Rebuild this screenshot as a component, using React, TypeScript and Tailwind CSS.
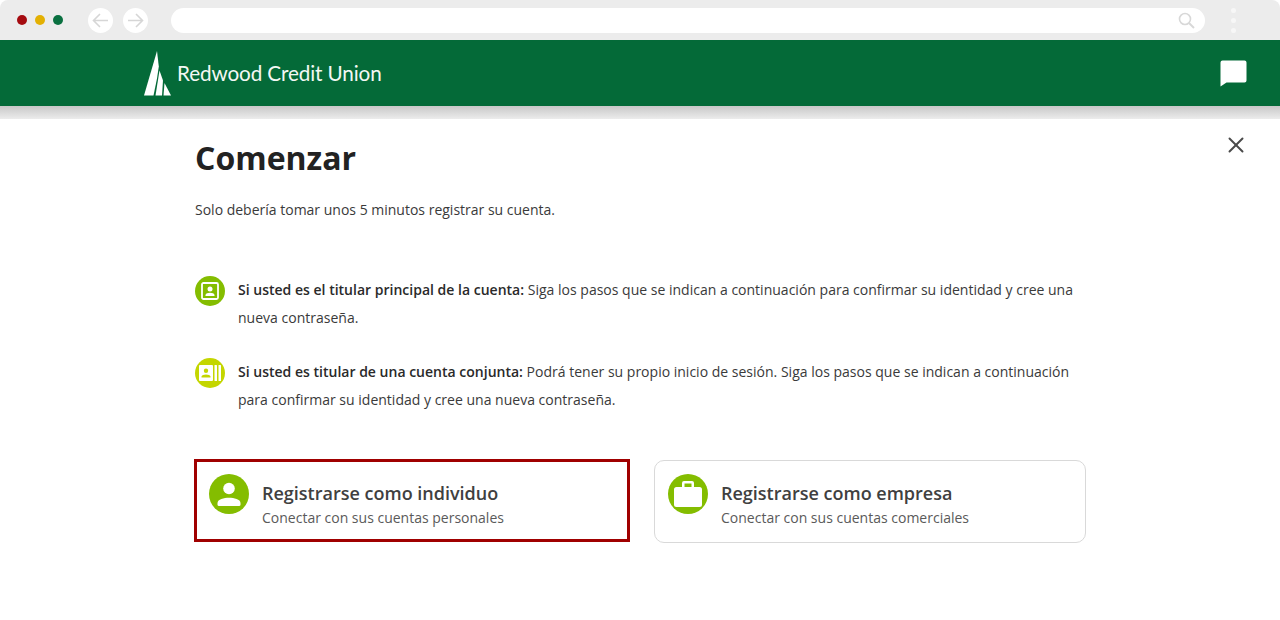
import { X } from "lucide-react";

function BrowserBar() {
    return (
        <div className="h-10 bg-[#ececec] rounded-t-lg flex items-center pl-[17px] pr-[40px]">
            <div className="flex items-center gap-[8px]">
                <div className="w-[10px] h-[10px] rounded-full bg-[#a50b10]"></div>
                <div className="w-[10px] h-[10px] rounded-full bg-[#e3b003]"></div>
                <div className="w-[10px] h-[10px] rounded-full bg-[#0a7040]"></div>
            </div>
            <div className="flex items-center gap-[10px] ml-[25px]">
                <div className="w-[25px] h-[25px] rounded-full bg-white flex items-center justify-center">
                    <svg className="w-[17px] h-[17px]" fill="none" stroke="#d6d6d6" strokeWidth={1.6} viewBox="0 0 17 17">
                        <path d="M16 8.5H1.5M8 2 1.500 8.500 8 15" />
                    </svg>
                </div>
                <div className="w-[25px] h-[25px] rounded-full bg-white flex items-center justify-center">
                    <svg className="w-[17px] h-[17px]" fill="none" stroke="#d6d6d6" strokeWidth={1.6} viewBox="0 0 17 17">
                        <path d="M1 8.500h14.500M9 2l6.500 6.500L9 15" />
                    </svg>
                </div>
            </div>
            <div className="ml-[23px] w-[1034px] h-[25px] rounded-full bg-white flex items-center justify-end pr-[10px]">
                <svg className="w-[17px] h-[17px]" fill="none" stroke="#d8d8d8" strokeWidth={1.6} viewBox="0 0 17 17">
                    <circle cx="7" cy="7" r="5.500" />
                    <path d="M11 11l5 5" strokeWidth={2} />
                </svg>
            </div>
            <div className="ml-[26px] flex flex-col gap-[5px]">
                <div className="w-[5px] h-[5px] rounded-full bg-[#f7f7f7]"></div>
                <div className="w-[5px] h-[5px] rounded-full bg-[#f7f7f7]"></div>
                <div className="w-[5px] h-[5px] rounded-full bg-[#f7f7f7]"></div>
            </div>
        </div>
    );
}

function Header() {
    return (
        <div className="h-[66px] bg-[#046a38] flex items-center justify-between pl-[144px] pr-[33px]">
            <div className="flex items-center">
                <svg className="w-[27px] h-[46px] mt-[1px]" viewBox="0 0 27 46" fill="white">
                    <path d="M13 0 0 44.500h9.500L13 27.500 14.800 15.500z" />
                    <path d="M15.500 19.500 11.500 44.500h6.500l1-15z" />
                    <path d="M20.500 32 19.500 44.500H27z" />
                </svg>
                <span className="ml-[6px] mt-[1px] font-['Lato',sans-serif] text-[20.7px] leading-none tracking-[-0.12px] text-[#f4f8f4]">
                    Redwood Credit Union
                </span>
            </div>
            <svg className="w-[27px] h-[27px]" viewBox="0 0 27 27" fill="white">
                <path d="M2.500 0.500h22a2 2 0 0 1 2 2v18a2 2 0 0 1-2 2H6.500L0.500 26.500v-24a2 2 0 0 1 2-2z" />
            </svg>
        </div>
    );
}

function InfoRow({ color, icon, title, text }: { color: string; icon: React.ReactNode; title: string; text: string }) {
    return (
        <div className="flex items-start gap-[13px]">
            <div className={`w-[30px] h-[30px] rounded-full flex items-center justify-center shrink-0 ${color}`}>{icon}</div>
            <p className="w-[850px] text-[14.02px] leading-[28px] text-[#3a3a3a]">
                <span className="font-semibold text-[#2a2a2a]">{title}</span> {text}
            </p>
        </div>
    );
}

function OptionCard({ icon, title, subtitle, className }: { icon: React.ReactNode; title: string; subtitle: string; className: string }) {
    return (
        <div className={`flex items-start ${className}`}>
            <div className="w-[40px] h-[40px] rounded-full bg-[#84bd00] flex items-center justify-center shrink-0">{icon}</div>
            <div className="ml-[13px] pt-[7px]">
                <div className="text-[18px] leading-[24px] font-semibold text-[#404040]">{title}</div>
                <div className="text-[14px] leading-[24px] mt-[1px] text-[#5a5a5a]">{subtitle}</div>
            </div>
        </div>
    );
}

export default function App() {
    return (
        <div className="w-[1280px] h-[620px] bg-white overflow-hidden font-['Open_Sans',sans-serif]">
            <BrowserBar />
            <Header />
            <div className="h-[13px] bg-gradient-to-b from-[#c8c8c8] to-[#ececec]"></div>

            <div className="relative pl-[195px]">
                <button className="absolute right-[31px] top-[13px] text-[#4a4a4a]">
                    <X className="w-[26px] h-[26px]" strokeWidth={1.8} />
                </button>

                <h1 className="pt-[17px] text-[32px] leading-[44px] font-bold text-[#222222]">Comenzar</h1>
                <p className="mt-[16px] text-[14px] leading-[28px] text-[#3a3a3a]">Solo debería tomar unos 5 minutos registrar su cuenta.</p>

                <div className="mt-[52px] flex flex-col gap-[26px]">
                    <InfoRow
                        color="bg-[#84bd00]"
                        icon={
                            <svg className="w-[18px] h-[18px]" viewBox="0 0 18 18" fill="none">
                                <rect x="1" y="1" width="16" height="16" rx="1.500" stroke="white" strokeWidth={1.800} />
                                <circle cx="9" cy="7" r="2.500" fill="white" />
                                <path d="M4.500 14v-1c0-1.500 2.500-2.200 4.500-2.200s4.500.7 4.500 2.200v1z" fill="white" />
                            </svg>
                        }
                        title="Si usted es el titular principal de la cuenta:"
                        text="Siga los pasos que se indican a continuación para confirmar su identidad y cree una nueva contraseña."
                    />
                    <InfoRow
                        color="bg-[#c4d600]"
                        icon={
                            <svg className="w-[22px] h-[16px]" viewBox="0 0 22 16" fill="white">
                                <path fillRule="evenodd" d="M1 0h12a1 1 0 0 1 1 1v14a1 1 0 0 1-1 1H1a1 1 0 0 1-1-1V1a1 1 0 0 1 1-1zm6 3.500a2.200 2.200 0 1 0 0 4.400 2.200 2.200 0 0 0 0-4.400zM2.500 12.500h9v-1c0-1.300-2.500-2-4.500-2s-4.500.7-4.500 2z" />
                                <rect x="15.500" y="0" width="2.500" height="16" rx="0.500" />
                                <rect x="19.500" y="0" width="2.500" height="16" rx="0.500" />
                            </svg>
                        }
                        title="Si usted es titular de una cuenta conjunta:"
                        text="Podrá tener su propio inicio de sesión. Siga los pasos que se indican a continuación para confirmar su identidad y cree una nueva contraseña."
                    />
                </div>

                <div className="mt-[45px] ml-[-1px] flex items-start gap-[24px]">
                    <OptionCard
                        className="w-[436px] h-[83px] border-[3px] border-[#a00000] pl-[12px] pt-[12px]"
                        title="Registrarse como individuo"
                        subtitle="Conectar con sus cuentas personales"
                        icon={
                            <svg className="w-[24px] h-[24px]" viewBox="0 0 24 24" fill="white">
                                <circle cx="12" cy="6.500" r="5.800" />
                                <path d="M0.500 21c0-3.800 6.500-5.300 11.500-5.300s11.500 1.500 11.500 5.300v1.500a1.500 1.500 0 0 1-1.500 1.500H2a1.500 1.500 0 0 1-1.500-1.500z" />
                            </svg>
                        }
                    />
                    <OptionCard
                        className="w-[432px] h-[83px] mt-[1px] rounded-[10px] border border-[#d9d9d9] pl-[13px] pt-[13px]"
                        title="Registrarse como empresa"
                        subtitle="Conectar con sus cuentas comerciales"
                        icon={
                            <svg className="w-[28px] h-[26px]" viewBox="0 0 28 26" fill="white">
                                <path fillRule="evenodd" d="M10 0h8a2 2 0 0 1 2 2v4h5.500A2.500 2.500 0 0 1 28 8.500v15a2.500 2.500 0 0 1-2.500 2.500h-23A2.500 2.500 0 0 1 0 23.500v-15A2.500 2.500 0 0 1 2.500 6H8V2a2 2 0 0 1 2-2zm.500 2.500V6h7V2.500z" />
                            </svg>
                        }
                    />
                </div>
            </div>
        </div>
    );
}
